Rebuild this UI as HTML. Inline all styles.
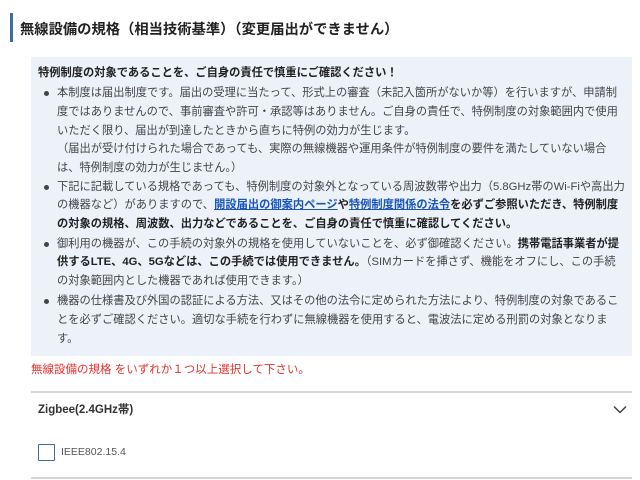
<!DOCTYPE html>
<html><head><meta charset="utf-8"><style>
*{margin:0;padding:0;box-sizing:border-box}
body{width:640px;height:480px;background:#fff;font-family:"Liberation Sans","Noto Sans CJK JP",sans-serif;position:relative;overflow:hidden;color:#444}
.bar{position:absolute;left:10px;top:13px;width:3px;height:29px;background:#3a6ea8}
.h{position:absolute;left:20px;top:18px;font-size:14.3px;font-weight:bold;color:#222;white-space:nowrap}
.box{position:absolute;left:31px;top:57px;width:601px;height:299px;background:#edf1fa}
.l{position:absolute;font-size:11.25px;white-space:nowrap;line-height:18px}
.b{font-weight:bold;color:#222}
.dot{position:absolute;width:5px;height:5px;border-radius:50%;background:#444}
a{color:#1a56b8;text-decoration:underline;font-weight:bold}
.red{position:absolute;left:31px;top:361px;font-size:11.5px;color:#e8322e;white-space:nowrap}
.hr{position:absolute;left:31px;width:601px;height:2px;background:#d6d6d6}
.z{position:absolute;left:38px;top:401px;font-size:11.5px;font-weight:bold;color:#333}
.cb{position:absolute;left:38px;top:444px;width:17px;height:17px;border:1.5px solid #3b6ea5;border-radius:1px;background:#fff}
.lab{position:absolute;left:61px;top:446px;font-size:10.5px;color:#555}
</style></head><body>
<div class="bar"></div>
<div class="h">無線設備の規格（相当技術基準）（変更届出ができません）</div>
<div class="box"></div>
<div class="l b" style="left:38px;top:64px">特例制度の対象であることを、ご自身の責任で慎重にご確認ください！</div>
<div class="dot" style="left:44px;top:91px"></div>
<div class="l" style="left:57px;top:84px">本制度は届出制度です。届出の受理に当たって、形式上の審査（未記入箇所がないか等）を行いますが、申請制</div>
<div class="l" style="left:57px;top:103px">度ではありませんので、事前審査や許可・承認等はありません。ご自身の責任で、特例制度の対象範囲内で使用</div>
<div class="l" style="left:57px;top:122px">いただく限り、届出が到達したときから直ちに特例の効力が生じます。</div>
<div class="l" style="left:57px;top:140px">（届出が受け付けられた場合であっても、実際の無線機器や運用条件が特例制度の要件を満たしていない場合</div>
<div class="l" style="left:57px;top:159px">は、特例制度の効力が生じません。）</div>
<div class="dot" style="left:44px;top:185px"></div>
<div class="l" style="left:57px;top:178px">下記に記載している規格であっても、特例制度の対象外となっている周波数帯や出力（5.8GHz帯のWi-Fiや高出力</div>
<div class="l" style="left:57px;top:196px">の機器など）がありますので、<a>開設届出の御案内ページ</a><span class="b">や</span><a>特例制度関係の法令</a><span class="b">を必ずご参照いただき、特例制度</span></div>
<div class="l b" style="left:57px;top:215px">の対象の規格、周波数、出力などであることを、ご自身の責任で慎重に確認してください。</div>
<div class="dot" style="left:44px;top:242px"></div>
<div class="l" style="left:57px;top:235px">御利用の機器が、この手続の対象外の規格を使用していないことを、必ず御確認ください。<span class="b">携帯電話事業者が提</span></div>
<div class="l" style="left:57px;top:253px"><span class="b">供するLTE、4G、5Gなどは、この手続では使用できません。</span>（SIMカードを挿さず、機能をオフにし、この手続</div>
<div class="l" style="left:57px;top:272px">の対象範囲内とした機器であれば使用できます。）</div>
<div class="dot" style="left:44px;top:299px"></div>
<div class="l" style="left:57px;top:292px">機器の仕様書及び外国の認証による方法、又はその他の法令に定められた方法により、特例制度の対象であるこ</div>
<div class="l" style="left:57px;top:311px">とを必ずご確認ください。適切な手続を行わずに無線機器を使用すると、電波法に定める刑罰の対象となりま</div>
<div class="l" style="left:57px;top:330px">す。</div>
<div class="red">無線設備の規格 をいずれか１つ以上選択して下さい。</div>
<div class="hr" style="top:391px"></div>
<div class="z">Zigbee(2.4GHz帯)</div>
<svg style="position:absolute;left:613px;top:405px" width="14" height="9" viewBox="0 0 14 9"><path d="M1 1.5L7 7.5L13 1.5" fill="none" stroke="#444" stroke-width="1.5"/></svg>
<div class="cb"></div>
<div class="lab">IEEE802.15.4</div>
<div class="hr" style="top:477px"></div>
</body></html>
